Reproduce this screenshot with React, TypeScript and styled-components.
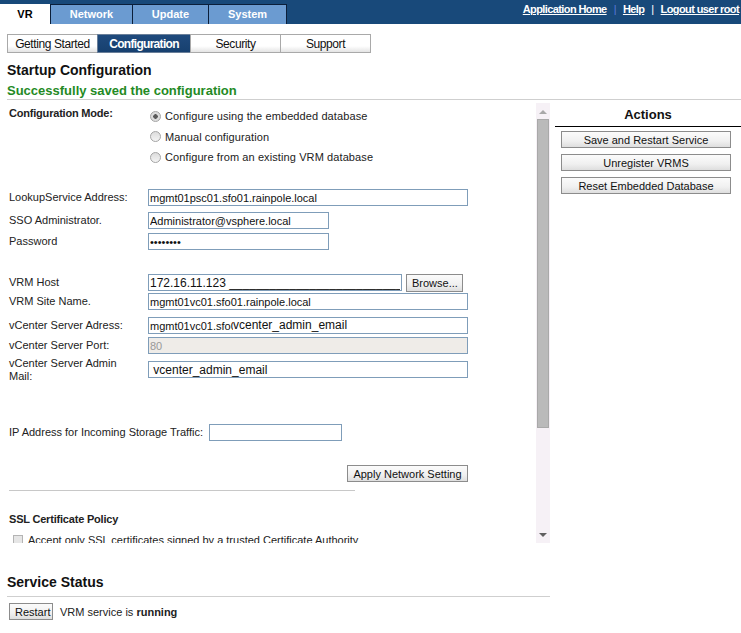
import React from 'react'
import styled, { createGlobalStyle } from 'styled-components'

const GlobalStyle = createGlobalStyle`
  body {
    margin: 0;
    background: #fff;
    font-family: "Liberation Sans", Arial, sans-serif;
    color: #1e1e1e;
  }
`

const TopBar = styled.div`
  height: 24px;
  background: #18497a;
  display: flex;
  justify-content: space-between;
`

const MainTabs = styled.div`
  display: flex;
  align-items: flex-end;
`

const MainTab = styled.div<{ $active?: boolean; $w: number }>`
  box-sizing: border-box;
  width: ${(p) => p.$w}px;
  height: 20px;
  padding-bottom: 1px;
  display: flex;
  align-items: center;
  justify-content: center;
  font-size: 11px;
  font-weight: bold;
  background: ${(p) => (p.$active ? '#fff' : '#6b9bd1')};
  color: ${(p) => (p.$active ? '#000' : '#fff')};
  border: ${(p) => (p.$active ? 'none' : '1px solid #0b1f3a')};
  border-bottom: none;
  margin-left: ${(p) => (p.$active ? '0' : '-1px')};
  &:nth-child(2) {
    margin-left: 0;
  }
`

const TopLinks = styled.div`
  display: flex;
  align-items: flex-start;
  padding: 3px 2px 0 0;
  font-size: 11px;
  font-weight: bold;
  letter-spacing: -0.6px;
  color: #fff;
`

const TopLink = styled.a`
  color: #fff;
  text-decoration: underline;
`

const Sep = styled.span<{ $blue?: boolean }>`
  margin: 0 7px;
  color: ${(p) => (p.$blue ? '#5878d8' : '#fff')};
  font-weight: normal;
`

const SubTabs = styled.div`
  display: flex;
  margin: 10px 0 0 7px;
`

const SubTab = styled.div<{ $active?: boolean; $w: number }>`
  box-sizing: border-box;
  width: ${(p) => p.$w}px;
  height: 19px;
  margin-left: -1px;
  &:first-child {
    margin-left: 0;
  }
  display: flex;
  align-items: center;
  justify-content: center;
  font-size: 12px;
  letter-spacing: ${(p) => (p.$active ? '-0.7px' : '-0.4px')};
  font-weight: ${(p) => (p.$active ? 'bold' : 'normal')};
  color: ${(p) => (p.$active ? '#fff' : '#111')};
  border: 1px solid ${(p) => (p.$active ? '#6a7f99' : '#a9a9a9')};
  background: ${(p) =>
    p.$active
      ? 'linear-gradient(180deg, #1f4a7d 0%, #17406f 100%)'
      : 'linear-gradient(180deg, #ffffff 0%, #ffffff 65%, #e4e4e4 100%)'};
`

const PageTitle = styled.h1`
  margin: 9px 0 0 7px;
  font-size: 14px;
  line-height: 16px;
  font-weight: bold;
  color: #111;
`

const SavedNote = styled.div`
  margin: 5px 0 0 7px;
  font-size: 13px;
  line-height: 16px;
  font-weight: bold;
  color: #248a24;
`

const Divider = styled.div`
  margin-left: 7px;
  height: 1px;
  background: #cfcfcf;
`

const MainRow = styled.div`
  display: flex;
  margin: 3px 0 0 7px;
  gap: 5px;
`

const ScrollPanel = styled.div`
  width: 543px;
  height: 440px;
  display: flex;
`

const PanelContent = styled.div`
  flex: 1;
  overflow: hidden;
  padding: 3px 0 0 2px;
  font-size: 11px;
`

const ScrollBar = styled.div`
  width: 14px;
  background: #f6f1f6;
  display: flex;
  flex-direction: column;
  align-items: center;
`

const ArrowBtn = styled.div`
  height: 16px;
  width: 14px;
  display: flex;
  align-items: center;
  justify-content: center;
`

const Thumb = styled.div`
  box-sizing: border-box;
  width: 12px;
  height: 309px;
  background: #bababa;
  border: 1px solid #a9a9a9;
`

const Track = styled.div`
  flex: 1;
`

const ModeRow = styled.div`
  display: flex;
`

const ModeLabel = styled.div`
  width: 141px;
  line-height: 14px;
  font-weight: bold;
  letter-spacing: -0.2px;
  color: #222;
`

const RadioGroup = styled.div`
  display: flex;
  flex-direction: column;
`

const RadioRow = styled.label`
  height: 20.5px;
  display: flex;
  align-items: center;
  gap: 4px;
  color: #222;
  letter-spacing: 0.1px;
`

const RadioDot = styled.span<{ $checked?: boolean }>`
  box-sizing: border-box;
  width: 11px;
  height: 11px;
  border-radius: 50%;
  border: 1px solid #a4a4a4;
  background: ${(p) =>
    p.$checked
      ? 'radial-gradient(circle, #5a5a5a 0 2px, #dcdcdc 2.5px)'
      : 'linear-gradient(180deg, #dcdcdc, #f4f4f4)'};
`

const FieldRow = styled.div<{ $top: number }>`
  display: flex;
  align-items: center;
  margin-top: ${(p) => p.$top}px;
  height: 17px;
`

const FieldLabel = styled.div<{ $w?: number }>`
  flex: none;
  width: ${(p) => p.$w ?? 139}px;
  line-height: 13px;
  color: #222;
`

const FieldWrap = styled.div`
  position: relative;
`

const TextInput = styled.input<{ $w: number; $big?: boolean }>`
  box-sizing: border-box;
  width: ${(p) => p.$w}px;
  height: 17px;
  margin: 0;
  padding: 0 1px;
  border: 1px solid #7f9db9;
  font-family: "Liberation Sans", Arial, sans-serif;
  font-size: ${(p) => (p.$big ? '12px' : '11px')};
  color: #111;
  background: #fff;
  outline: none;
  &:disabled {
    background: #efece8;
    color: #999;
  }
`

const OverText = styled.span`
  position: absolute;
  left: 85px;
  top: 1px;
  font-size: 12px;
  line-height: 14px;
  background: #fff;
  color: #111;
`

const Button = styled.button<{ $w?: number }>`
  box-sizing: border-box;
  ${(p) => (p.$w ? `width: ${p.$w}px;` : '')}
  height: 17px;
  margin: 0;
  padding: 0 5px;
  border: 1px solid #8c8c8c;
  background: linear-gradient(180deg, #fbfbfb 0%, #f0f0f0 60%, #dedede 100%);
  font-family: "Liberation Sans", Arial, sans-serif;
  font-size: 11px;
  color: #111;
  white-space: nowrap;
`

const BrowseButton = styled(Button)`
  margin-left: 4px;
  height: 18px;
`

const ApplyRow = styled.div`
  width: 459px;
  display: flex;
  justify-content: flex-end;
  margin-top: 24px;
`

const PanelDivider = styled.div`
  width: 346px;
  height: 1px;
  background: #c8c8c8;
  margin-top: 8px;
`

const SubHeading = styled.div`
  margin-top: 21px;
  font-weight: bold;
  line-height: 14px;
  color: #222;
  letter-spacing: -0.2px;
`

const CheckRow = styled.div`
  display: flex;
  align-items: center;
  gap: 5px;
  margin: 7px 0 0 4px;
  line-height: 14px;
  color: #222;
  white-space: nowrap;
`

const CheckBox = styled.span`
  box-sizing: border-box;
  width: 10px;
  height: 10px;
  border: 1px solid #b4b4b4;
  background: #e6e6e6;
`

const ActionsPanel = styled.div`
  flex: 1;
  display: flex;
  flex-direction: column;
`

const ActionsTitle = styled.div`
  height: 23px;
  line-height: 23px;
  text-align: center;
  font-size: 13px;
  font-weight: bold;
  color: #111;
  border-bottom: 1px solid #000;
`

const ActionList = styled.div`
  display: flex;
  flex-direction: column;
  gap: 6px;
  margin: 4px 0 0 6px;
`

const StatusTitle = styled.h2`
  margin: 31px 0 0 7px;
  width: 543px;
  padding-bottom: 6px;
  border-bottom: 1px solid #cfcfcf;
  font-size: 14px;
  line-height: 16px;
  font-weight: bold;
  color: #111;
`

const StatusRow = styled.div`
  display: flex;
  align-items: center;
  gap: 7px;
  margin: 6px 0 0 9px;
  font-size: 11px;
  color: #222;
`

const Arrow = ({ down }: { down?: boolean }) => (
  <svg width="8" height="5" viewBox="0 0 8 5">
    <path d={down ? 'M0 0 H8 L4 4 Z' : 'M0 5 H8 L4 1 Z'} fill={down ? '#606060' : '#a8a8a8'} />
  </svg>
)

export default function App() {
  return (
    <>
      <GlobalStyle />
      <TopBar>
        <MainTabs>
          <MainTab $active $w={50}>VR</MainTab>
          <MainTab $w={83}>Network</MainTab>
          <MainTab $w={77}>Update</MainTab>
          <MainTab $w={79}>System</MainTab>
        </MainTabs>
        <TopLinks>
          <TopLink>Application Home</TopLink>
          <Sep $blue>|</Sep>
          <TopLink>Help</TopLink>
          <Sep>|</Sep>
          <TopLink>Logout user root</TopLink>
        </TopLinks>
      </TopBar>

      <SubTabs>
        <SubTab $w={91}>Getting Started</SubTab>
        <SubTab $active $w={94}>Configuration</SubTab>
        <SubTab $w={91}>Security</SubTab>
        <SubTab $w={91}>Support</SubTab>
      </SubTabs>

      <PageTitle>Startup Configuration</PageTitle>
      <SavedNote>Successfully saved the configuration</SavedNote>
      <Divider />

      <MainRow>
        <ScrollPanel>
          <PanelContent>
            <ModeRow>
              <ModeLabel>Configuration Mode:</ModeLabel>
              <RadioGroup>
                <RadioRow>
                  <RadioDot $checked />
                  Configure using the embedded database
                </RadioRow>
                <RadioRow>
                  <RadioDot />
                  Manual configuration
                </RadioRow>
                <RadioRow>
                  <RadioDot />
                  Configure from an existing VRM database
                </RadioRow>
              </RadioGroup>
            </ModeRow>

            <FieldRow $top={21.5}>
              <FieldLabel>LookupService Address:</FieldLabel>
              <TextInput $w={320} defaultValue="mgmt01psc01.sfo01.rainpole.local" />
            </FieldRow>
            <FieldRow $top={6}>
              <FieldLabel>SSO Administrator.</FieldLabel>
              <TextInput $w={181} defaultValue="Administrator@vsphere.local" />
            </FieldRow>
            <FieldRow $top={4}>
              <FieldLabel>Password</FieldLabel>
              <TextInput $w={181} type="password" defaultValue="password" />
            </FieldRow>

            <FieldRow $top={24}>
              <FieldLabel>VRM Host</FieldLabel>
              <TextInput $w={254} $big defaultValue="172.16.11.123 __________________________" />
              <BrowseButton $w={57}>Browse...</BrowseButton>
            </FieldRow>
            <FieldRow $top={2}>
              <FieldLabel>VRM Site Name.</FieldLabel>
              <TextInput $w={320} defaultValue="mgmt01vc01.sfo01.rainpole.local" />
            </FieldRow>
            <FieldRow $top={7}>
              <FieldLabel>vCenter Server Adress:</FieldLabel>
              <FieldWrap>
                <TextInput $w={320} defaultValue="mgmt01vc01.sfo01.rainpole.local" />
                <OverText>vcenter_admin_email</OverText>
              </FieldWrap>
            </FieldRow>
            <FieldRow $top={3}>
              <FieldLabel>vCenter Server Port:</FieldLabel>
              <TextInput $w={320} disabled defaultValue="80" />
            </FieldRow>
            <FieldRow $top={7}>
              <FieldLabel>
                vCenter Server Admin
                <br />
                Mail:
              </FieldLabel>
              <TextInput $w={320} $big defaultValue=" vcenter_admin_email" />
            </FieldRow>

            <FieldRow $top={46}>
              <FieldLabel $w={200}>IP Address for Incoming Storage Traffic:</FieldLabel>
              <TextInput $w={133} />
            </FieldRow>

            <ApplyRow>
              <Button $w={121}>Apply Network Setting</Button>
            </ApplyRow>
            <PanelDivider />

            <SubHeading>SSL Certificate Policy</SubHeading>
            <CheckRow>
              <CheckBox />
              Accept only SSL certificates signed by a trusted Certificate Authority
            </CheckRow>
          </PanelContent>
          <ScrollBar>
            <ArrowBtn>
              <Arrow />
            </ArrowBtn>
            <Thumb />
            <Track />
            <ArrowBtn>
              <Arrow down />
            </ArrowBtn>
          </ScrollBar>
        </ScrollPanel>

        <ActionsPanel>
          <ActionsTitle>Actions</ActionsTitle>
          <ActionList>
            <Button $w={170}>Save and Restart Service</Button>
            <Button $w={170}>Unregister VRMS</Button>
            <Button $w={170}>Reset Embedded Database</Button>
          </ActionList>
        </ActionsPanel>
      </MainRow>

      <StatusTitle>Service Status</StatusTitle>
      <StatusRow>
        <Button $w={44}>Restart</Button>
        <span>
          VRM service is <b>running</b>
        </span>
      </StatusRow>
    </>
  )
}
